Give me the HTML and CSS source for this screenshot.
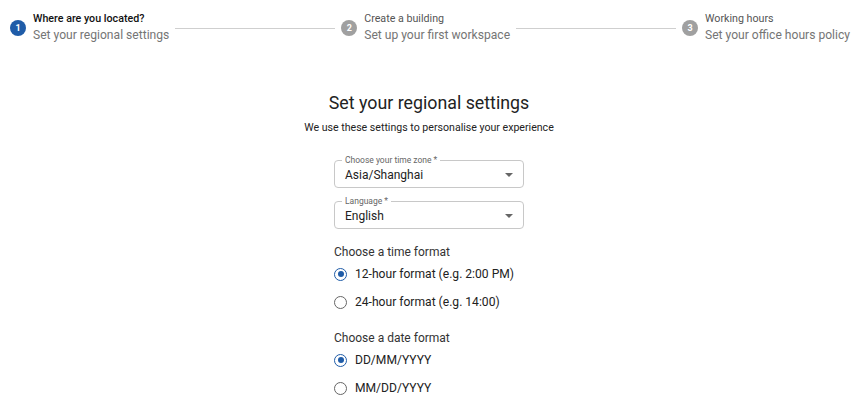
FILE: index.html
```html
<!DOCTYPE html>
<html lang="en">
<head>
<meta charset="utf-8">
<title>Set your regional settings</title>
<link rel="stylesheet" href="styles.css">
</head>
<body>
<header class="stepper">
  <div class="step">
    <span class="step-num active">1</span>
    <div class="step-text">
      <div class="step-title bold">Where are you located?</div>
      <div class="step-sub">Set your regional settings</div>
    </div>
  </div>
  <div class="step-line"></div>
  <div class="step">
    <span class="step-num">2</span>
    <div class="step-text">
      <div class="step-title">Create a building</div>
      <div class="step-sub">Set up your first workspace</div>
    </div>
  </div>
  <div class="step-line"></div>
  <div class="step">
    <span class="step-num">3</span>
    <div class="step-text">
      <div class="step-title">Working hours</div>
      <div class="step-sub">Set your office hours policy</div>
    </div>
  </div>
</header>

<main class="content">
  <h1 class="heading">Set your regional settings</h1>
  <p class="intro">We use these settings to personalise your experience</p>

  <form class="form">
    <div class="field">
      <span class="field-label">Choose your time zone *</span>
      <span class="field-value">Asia/Shanghai</span>
      <span class="caret"></span>
    </div>
    <div class="field field-2">
      <span class="field-label">Language *</span>
      <span class="field-value">English</span>
      <span class="caret"></span>
    </div>

    <div class="group-label">Choose a time format</div>
    <label class="radio-row"><span class="radio checked"></span>12-hour format (e.g. 2:00 PM)</label>
    <label class="radio-row"><span class="radio"></span>24-hour format (e.g. 14:00)</label>

    <div class="group-label group-2">Choose a date format</div>
    <label class="radio-row"><span class="radio checked"></span>DD/MM/YYYY</label>
    <label class="radio-row"><span class="radio"></span>MM/DD/YYYY</label>
  </form>
</main>
</body>
</html>
```

FILE: styles.css
```css
html, body {
  margin: 0;
  padding: 0;
  background: #ffffff;
  font-family: Roboto, "Liberation Sans", Arial, sans-serif;
  color: #222;
}

.stepper {
  display: flex;
  align-items: center;
  padding: 12px 15px 0 10px;
}

.step {
  display: flex;
  align-items: center;
  gap: 7px;
}

.step-num {
  width: 16px;
  height: 16px;
  border-radius: 50%;
  background: #a0a0a0;
  color: #fff;
  font-size: 9px;
  font-weight: 700;
  display: flex;
  align-items: center;
  justify-content: center;
  flex: none;
}

.step-num.active {
  background: #1f5ca8;
}

.step-text {
  display: flex;
  flex-direction: column;
}

.step-title {
  font-size: 10.7px;
  line-height: 14px;
  color: #555;
}

.step-title.bold {
  color: #111;
  font-weight: 500;
}

.step-sub {
  font-size: 12.1px;
  line-height: 18px;
  color: #757575;
  white-space: nowrap;
}

.step-line {
  flex: 1;
  height: 1px;
  background: #cfcfcf;
  margin: 0 6px;
}

.content {
  display: flex;
  flex-direction: column;
  align-items: center;
  padding-right: 7px;
}

.heading {
  margin: 47px 0 0;
  font-size: 17.8px;
  line-height: 24px;
  font-weight: 400;
  color: #222;
}

.intro {
  margin: 6px 0 0;
  font-size: 10.6px;
  line-height: 14px;
  color: #222;
}

.form {
  width: 190px;
  margin-top: 25px;
  display: flex;
  flex-direction: column;
}

.field {
  position: relative;
  height: 28px;
  box-sizing: border-box;
  border: 1px solid #c8c8c8;
  border-radius: 4px;
  display: flex;
  align-items: center;
  padding-left: 10px;
}

.field-2 {
  margin-top: 13px;
}

.field-label {
  position: absolute;
  left: 7px;
  top: -6px;
  padding: 0 3px;
  background: #fff;
  font-size: 8.5px;
  line-height: 10px;
  color: #666;
}

.field-value {
  font-size: 12px;
  color: #222;
  padding-top: 1px;
}

.caret {
  position: absolute;
  right: 10px;
  top: 12px;
  width: 0;
  height: 0;
  border-left: 4px solid transparent;
  border-right: 4px solid transparent;
  border-top: 4px solid #666;
}

.group-label {
  margin-top: 15px;
  font-size: 12px;
  line-height: 16px;
  color: #333;
}

.group-2 {
  margin-top: 14px;
}

.radio-row {
  height: 28px;
  display: flex;
  align-items: center;
  gap: 8px;
  font-size: 12.1px;
  color: #222;
  white-space: nowrap;
}

.radio {
  width: 13px;
  height: 13px;
  box-sizing: border-box;
  border: 1.5px solid #666;
  border-radius: 50%;
  flex: none;
  display: flex;
  align-items: center;
  justify-content: center;
}

.radio.checked {
  border-color: #1f5ca8;
}

.radio.checked::after {
  content: "";
  width: 6px;
  height: 6px;
  border-radius: 50%;
  background: #1f5ca8;
}
```
